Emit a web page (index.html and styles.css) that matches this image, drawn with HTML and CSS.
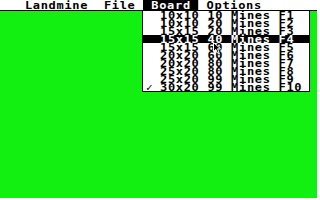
FILE: index.html
```html
<!DOCTYPE html>
<html lang="en">
<head>
  <meta charset="UTF-8">
  <title>Landmine</title>
  <link rel="stylesheet" href="styles.css">
</head>
<body>
  <div class="screen">
    <div class="menubar">
      <div class="titles">
        <span class="title">Landmine</span>
        <span class="title">File</span>
        <span class="title active">Board</span>
        <span class="title">Options</span>
      </div>
    </div>
    <!-- Board menu is open -->
    <div class="dropdown">
      <div class="item"><span class="check"></span><span class="label">10x10 10 Mines F1</span></div>
      <div class="item"><span class="check"></span><span class="label">10x10 20 Mines F2</span></div>
      <div class="item"><span class="check"></span><span class="label">15x15 20 Mines F3</span></div>
      <div class="item selected"><span class="check"></span><span class="label">15x15 40 Mines F4</span></div>
      <div class="item"><span class="check"></span><span class="label">15x15 60 Mines F5</span></div>
      <div class="item"><span class="check"></span><span class="label">20x20 60 Mines F6</span></div>
      <div class="item"><span class="check"></span><span class="label">20x20 80 Mines F7</span></div>
      <div class="item"><span class="check"></span><span class="label">25x20 80 Mines F8</span></div>
      <div class="item"><span class="check"></span><span class="label">25x20 99 Mines F9</span></div>
      <div class="item"><span class="check">✓</span><span class="label">30x20 99 Mines F10</span></div>
    </div>
    <svg class="pointer" width="9" height="12" viewBox="0 0 9 12">
      <path d="M0.5 0.5 L0.5 9.5 L2.8 7.4 L4.3 10.8 L5.9 10.1 L4.5 6.8 L7.6 6.8 Z" fill="#000" stroke="#fff" stroke-width="1"/>
    </svg>
  </div>
</body>
</html>
```

FILE: styles.css
```css
body { margin: 0; background: #fff; font-family: "DejaVu Sans Mono", monospace; font-weight: bold; font-size: 10px; }
.screen { position: relative; width: 317px; height: 198px; background: #12f012; overflow: hidden; }
.menubar { height: 10px; background: #fff; border-bottom: 1px solid #000; padding-left: 17px; }
/* system font is wider than DejaVu Mono, so the text rows are stretched */
.titles { display: flex; width: max-content; transform: scaleX(1.2); transform-origin: 0 0; }
.title {
  height: 9px; padding: 1px 6.583px 0; line-height: 9px;
  letter-spacing: 0.563px; white-space: pre; color: #000;
}
.title.active { background: #000; color: #fff; }
.dropdown {
  position: absolute; left: 142px; top: 10px; width: 166px;
  background: #fff; border: 1px solid #000;
}
.item { display: flex; height: 7px; padding: 1px 0 0 3px; line-height: 7px; color: #000; }
.item.selected { background: #000; color: #fff; }
.check { width: 14px; font-size: 11px; }
.label { letter-spacing: 0.563px; white-space: pre; transform: scaleX(1.2); transform-origin: 0 0; }
.pointer { position: absolute; left: 213px; top: 42px; }
```
